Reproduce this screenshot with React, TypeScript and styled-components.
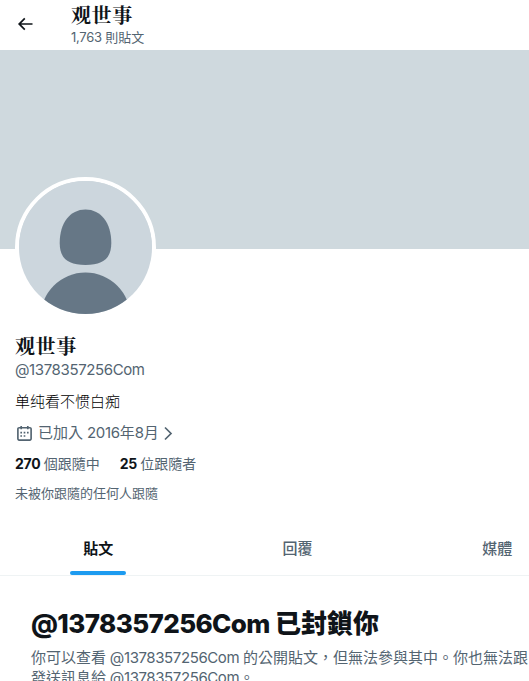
import React from 'react';
import styled, { createGlobalStyle } from 'styled-components';

const GlobalStyle = createGlobalStyle`
  html, body { margin: 0; background: #fff; overflow: hidden; }
  body { font-family: Inter, "Noto Sans CJK TC", sans-serif; color: #0f1419; font-size: 15px; line-height: 20px; }
  h1, h2, p { margin: 0; }
`;

const Page = styled.div`
  width: 529px;
  height: 681px;
  overflow: hidden;
`;
const Column = styled.main`
  width: 598px;
  margin-left: -1px;
`;
const Header = styled.header`
  height: 50px;
  display: flex;
  align-items: flex-start;
`;
const Back = styled.div`
  width: 56px;
  padding: 14px 0 0 16px;
  box-sizing: content-box;
  svg { display: block; }
`;
const Name = styled.h2`
  font-family: "Noto Serif CJK SC", "Noto Serif SC", "Noto Sans CJK SC", serif;
  font-size: 20px;
  font-weight: 700;
  line-height: 24px;
  height: 24px;
  letter-spacing: 0.6px;
`;
const HeaderText = styled.div`
  padding-top: 3px;
`;
const Count = styled.div`
  font-size: 13px;
  line-height: 16px;
  margin-top: 2px;
  color: #536471;
`;
const Latin = styled.span<{ $gap?: number }>`
  letter-spacing: ${p => p.$gap ?? 0}px;
`;
const Banner = styled.div`
  height: 199px;
  background: #cfd9de;
`;
const Profile = styled.section`
  display: flow-root;
  height: 274px;
  padding: 0 16px;
`;
const Avatar = styled.div`
  width: 133px;
  height: 133px;
  margin: -72px 0 0 0;
  border: 4px solid #fff;
  border-radius: 50%;
  overflow: hidden;
  svg { display: block; }
`;
const ProfileName = styled(Name)`
  margin-top: 16px;
`;
const Handle = styled.div`
  color: #536471;
  margin-top: 2px;
`;
const Bio = styled.p`
  font-family: "Noto Sans CJK SC", sans-serif;
  font-weight: 300;
  color: #000;
  margin-top: 11px;
`;
const Joined = styled.div`
  display: flex;
  align-items: center;
  height: 20px;
  margin-top: 12px;
  color: #536471;
  white-space: nowrap;
`;
const JoinedText = styled.span`
  margin: 0 4px 0 4px;
`;
const Stats = styled.div`
  display: flex;
  gap: 20px;
  margin-top: 11px;
  font-size: 14px;
  color: #536471;
  b { color: #0f1419; font-weight: 700; letter-spacing: -0.2px; }
`;
const Note = styled.p`
  font-size: 13px;
  line-height: 16px;
  margin-top: 11px;
  color: #536471;
`;
const Tabs = styled.nav`
  display: grid;
  grid-template-columns: 198.500px 200px 199.500px;
  height: 52px;
  border-bottom: 1px solid #eff3f4;
`;
const Tab = styled.div<{ $active?: boolean }>`
  display: flex;
  flex-direction: column;
  align-items: center;
  justify-content: space-between;
  padding-top: 16px;
  font-weight: ${p => (p.$active ? 700 : 500)};
  color: ${p => (p.$active ? '#0f1419' : '#536471')};
`;
const Marker = styled.div`
  width: 56px;
  height: 4px;
  border-radius: 2px;
  background: #1d9bf0;
`;
const Blocked = styled.section`
  padding: 32px 0 0 32px;
`;
const Title = styled.h1`
  font-size: 26px;
  line-height: 32px;
  font-weight: 800;
  white-space: nowrap;
`;
const Description = styled.p`
  margin-top: 8px;
  color: #536471;
  white-space: nowrap;
`;

const handle = '@1378357256Com';

const BackIcon = () => (
  <svg width="20" height="20" viewBox="0 0 24 24" fill="#0f1419">
    <path d="M7.414 13l5.043 5.04-1.414 1.42L3.586 12l7.457-7.46 1.414 1.42L7.414 11H21v2H7.414z" />
  </svg>
);
const CalendarIcon = () => (
  <svg width="19" height="19" viewBox="0.500 0.500 23 23" fill="#536471">
    <path d="M7 4V3h2v1h6V3h2v1h1.500C19.890 4 21 5.120 21 6.500v12c0 1.380-1.110 2.500-2.500 2.500h-13C4.120 21 3 19.880 3 18.500v-12C3 5.120 4.120 4 5.500 4H7zm0 2H5.500c-.27 0-.5.220-.5.500v12c0 .280.230.500.500.500h13c.280 0 .5-.220.500-.500v-12c0-.280-.22-.5-.5-.5H17v1h-2V6H9v1H7V6zm0 6h2v-2H7v2zm0 4h2v-2H7v2zm4-4h2v-2h-2v2zm0 4h2v-2h-2v2zm4-4h2v-2h-2v2z" />
  </svg>
);
const ChevronIcon = () => (
  <svg width="10" height="16" viewBox="0 0 10 16" fill="none" stroke="#536471" strokeWidth="1.700">
    <path d="M2 2.500L8 8.500L2 14.500" />
  </svg>
);
const Person = () => (
  <svg width="133" height="133" viewBox="0 0 133 133">
    <rect width="133" height="133" fill="#ccd6dd" />
    <path d="M66.500 28.500C82 28.500 92.300 42 92.300 62C92.300 77.500 84 84 66.500 84S40.700 77.500 40.700 62C40.700 42 51 28.500 66.500 28.500Z" fill="#667786" />
    <circle cx="66.500" cy="136.500" r="45" fill="#667786" />
  </svg>
);

export default function App() {
  return (
    <Page>
      <GlobalStyle />
      <Column>
        <Header>
          <Back><BackIcon /></Back>
          <HeaderText>
            <Name>观世事</Name>
            <Count><Latin $gap={-0.25}>1,763 </Latin>則貼文</Count>
          </HeaderText>
        </Header>
        <Banner />
        <Profile>
          <Avatar><Person /></Avatar>
          <ProfileName>观世事</ProfileName>
          <Handle><Latin $gap={-0.38}>{handle}</Latin></Handle>
          <Bio>单纯看不惯白痴</Bio>
          <Joined>
            <CalendarIcon />
            <JoinedText>已加入<Latin $gap={-0.3}> 2016</Latin>年<Latin $gap={-0.2}>8</Latin>月</JoinedText>
            <ChevronIcon />
          </Joined>
          <Stats>
            <span><b>270 </b>個跟隨中</span>
            <span><b>25 </b>位跟隨者</span>
          </Stats>
          <Note>未被你跟隨的任何人跟隨</Note>
        </Profile>
        <Tabs>
          <Tab $active>貼文<Marker /></Tab>
          <Tab>回覆</Tab>
          <Tab>媒體</Tab>
        </Tabs>
        <Blocked>
          <Title><Latin $gap={-0.6}>{handle} </Latin>已封鎖你</Title>
          <Description>
            你可以查看<Latin $gap={-0.4}> {handle} </Latin>的公開貼文，但無法參與其中。你也無法跟<br />
            發送訊息給<Latin $gap={-0.4}> {handle}</Latin>。
          </Description>
        </Blocked>
      </Column>
    </Page>
  );
}
